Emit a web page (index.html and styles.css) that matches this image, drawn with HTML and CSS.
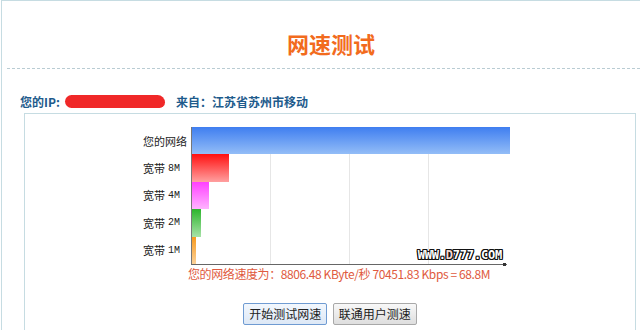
FILE: index.html
```html
<!DOCTYPE html>
<html lang="zh-CN">
<head>
  <meta charset="UTF-8" />
  <meta name="viewport" content="width=device-width, initial-scale=1.0" />
  <title>网速测试</title>
  <link rel="stylesheet" href="styles.css">
</head>
<body>
  <div id="page">
    <h1 class="title">网速测试</h1>
    <div class="rule"></div>

    <div class="ip-row">
      <span class="ip-label">您的IP:</span>
      <span class="ip-mask"></span>
      <span class="ip-from">来自：江苏省苏州市移动</span>
    </div>

    <div class="test-box">
      <div class="chart">
        <div class="labels">
          <div class="label">您的网络</div>
          <div class="label">宽带 <span class="mono">8M</span></div>
          <div class="label">宽带 <span class="mono">4M</span></div>
          <div class="label">宽带 <span class="mono">2M</span></div>
          <div class="label">宽带 <span class="mono">1M</span></div>
        </div>
        <div class="plot">
          <div class="row"><div class="bar bar-you" style="width:318px"></div></div>
          <div class="row"><div class="bar bar-8m" style="width:37px"></div></div>
          <div class="row"><div class="bar bar-4m" style="width:17px"></div></div>
          <div class="row"><div class="bar bar-2m" style="width:9px"></div></div>
          <div class="row"><div class="bar bar-1m" style="width:4px"></div></div>
          <span class="watermark">WWW.<b>D</b>777.COM</span>
          <span class="axis-dot"></span>
        </div>
      </div>

      <div id="speed-text">您的网络速度为：8806.48 KByte/秒 70451.83 Kbps = 68.8M</div>

      <div class="button-row">
        <button class="btn btn-main">开始测试网速</button>
        <button class="btn">联通用户测速</button>
      </div>
    </div>
  </div>
</body>
</html>
```

FILE: styles.css
```css
body {
  margin: 0;
  padding: 0;
  background: white;
  color: #222;
  font-family: "Noto Sans CJK SC", "Noto Sans", sans-serif;
  overflow: hidden;
}

#page {
  margin-left: 1px;
  height: 330px;
  border-left: 1px solid #c6dce2;
  border-top: 1px solid #c6dce2;
}

.title {
  margin: 0;
  padding: 30px 0 0 20px;
  height: 37px;
  line-height: 24px;
  font-size: 22px;
  font-weight: bold;
  color: #f26b1d;
  text-align: center;
}

.rule {
  margin-left: 5px;
  border-top: 1px dashed #b9ccd3;
}

.ip-row {
  display: flex;
  align-items: center;
  margin-top: 24px;
  padding-left: 18px;
  height: 16px;
  font-size: 12px;
  font-weight: bold;
  color: #1e5b8c;
}

.ip-mask {
  display: inline-block;
  width: 100px;
  height: 13px;
  margin: 0 11px 0 5px;
  background: #f02828;
  border-radius: 7px 8px 6px 7px;
}

.test-box {
  margin: 4px 4px 0 22px;
  height: 230px;
  border: 1px solid #c6dce2;
  border-bottom: none;
}

.chart {
  display: flex;
  margin: 13px 0 0 118px;
}

.labels {
  width: 48px;
  display: grid;
  grid-template-rows: repeat(5, 1fr);
  height: 137px;
}

.label {
  display: flex;
  align-items: center;
  font-size: 11px;
  color: #222;
}

.mono {
  margin-left: 3px;
  font-family: "Liberation Mono", monospace;
  font-size: 10px;
}

.plot {
  position: relative;
  width: 315px;
  height: 137px;
  display: grid;
  grid-template-rows: repeat(5, 1fr);
  border-left: 1px solid #777;
  border-bottom: 1px solid #666;
  background-image: linear-gradient(to right, transparent 78px, #e6e6e6 78px, #e6e6e6 79px, transparent 79px);
  background-size: 79px 100%;
}

.row {
  display: flex;
}

.bar {
  height: 100%;
  flex-shrink: 0;
}

.bar-you { background: linear-gradient(#3f7ef0, #93bdf7); }
.bar-8m  { background: linear-gradient(#ff1010, #ffa0a0); }
.bar-4m  { background: linear-gradient(#ff40ff, #ffb4ff); }
.bar-2m  { background: linear-gradient(#2cb52c, #a8e2a8); }
.bar-1m  { background: linear-gradient(#f79a1e, #fcd29a); }

.watermark {
  position: absolute;
  right: 5px;
  bottom: 3px;
  font-family: "DejaVu Sans Mono", monospace;
  font-size: 12px;
  font-weight: bold;
  line-height: 12px;
  color: white;
  letter-spacing: -0.2px;
  text-shadow: 1px 0 #111, -1px 0 #111, 0 1px #111, 0 -1px #111, 1px 1px #111, -1px -1px #111, 1px -1px #111, -1px 1px #111;
}

.watermark b {
  color: #f3d8d0;
}

.axis-dot {
  position: absolute;
  right: 1px;
  bottom: -2px;
  width: 3px;
  height: 3px;
  background: #333;
}

#speed-text {
  margin: 2px 0 0 163px;
  font-size: 12px;
  line-height: 14px;
  letter-spacing: -0.4px;
  color: #e05a40;
}

.button-row {
  margin-top: 19px;
  text-align: center;
}

.btn {
  height: 22px;
  padding: 0 5px;
  margin: 0 1px;
  font-family: "Noto Sans CJK SC", sans-serif;
  font-size: 12px;
  color: #222;
  border: 1px solid #a8a8a8;
  border-radius: 2px;
  background: linear-gradient(#f8f8f8, #dedede);
}

.btn-main {
  border-color: #6f9bd2;
  background: linear-gradient(#f2f7fd, #dde8f6);
}
```
